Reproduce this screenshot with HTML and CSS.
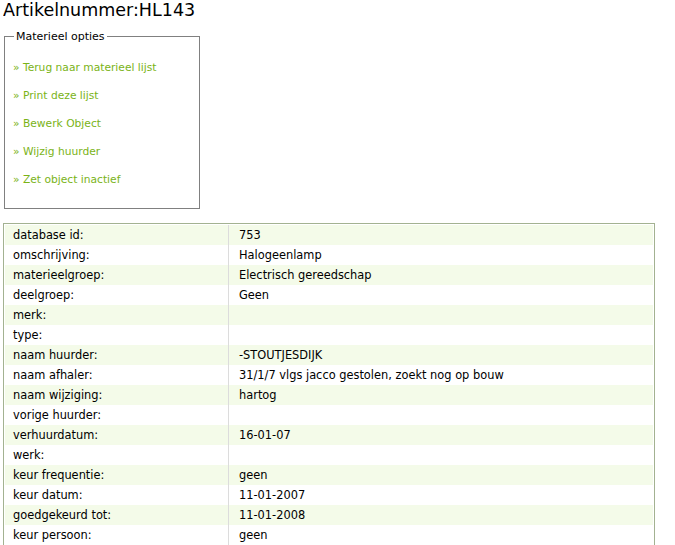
FILE: index.html
```html
<!DOCTYPE html>
<html lang="nl">

<head>
  <meta charset="UTF-8">
  <title>Artikelnummer:HL143</title>
  <link rel="stylesheet" href="styles.css">
</head>

<body>
  <h1 class="title">Artikelnummer:HL143</h1>

  <fieldset class="options">
    <legend>Materieel opties</legend>
    <ul class="option-list">
      <li><a href="#">&raquo; Terug naar materieel lijst</a></li>
      <li><a href="#">&raquo; Print deze lijst</a></li>
      <li><a href="#">&raquo; Bewerk Object</a></li>
      <li><a href="#">&raquo; Wijzig huurder</a></li>
      <li><a href="#">&raquo; Zet object inactief</a></li>
    </ul>
  </fieldset>

  <table class="details">
    <tr><td class="label">database id:</td><td class="value">753</td></tr>
    <tr><td class="label">omschrijving:</td><td class="value">Halogeenlamp</td></tr>
    <tr><td class="label">materieelgroep:</td><td class="value">Electrisch gereedschap</td></tr>
    <tr><td class="label">deelgroep:</td><td class="value">Geen</td></tr>
    <tr><td class="label">merk:</td><td class="value"></td></tr>
    <tr><td class="label">type:</td><td class="value"></td></tr>
    <tr><td class="label">naam huurder:</td><td class="value">-STOUTJESDIJK</td></tr>
    <tr><td class="label">naam afhaler:</td><td class="value">31/1/7 vlgs jacco gestolen, zoekt nog op bouw</td></tr>
    <tr><td class="label">naam wijziging:</td><td class="value">hartog</td></tr>
    <tr><td class="label">vorige huurder:</td><td class="value"></td></tr>
    <tr><td class="label">verhuurdatum:</td><td class="value">16-01-07</td></tr>
    <tr><td class="label">werk:</td><td class="value"></td></tr>
    <tr><td class="label">keur frequentie:</td><td class="value">geen</td></tr>
    <tr><td class="label">keur datum:</td><td class="value">11-01-2007</td></tr>
    <tr><td class="label">goedgekeurd tot:</td><td class="value">11-01-2008</td></tr>
    <tr><td class="label">keur persoon:</td><td class="value">geen</td></tr>
  </table>
</body>

</html>
```

FILE: styles.css
```css
body {
  margin: 0 0 0 3px;
  font-family: "DejaVu Sans", Verdana, sans-serif;
  font-size: 11.4px;
  color: #000;
  background: #fff;
}

.title {
  margin: 0;
  font-size: 17.5px;
  font-weight: normal;
  line-height: 20px;
}

.options {
  width: 196px;
  height: 179px;
  box-sizing: border-box;
  margin: 10px 0 14px 1px;
  padding: 0 0 0 8px;
  border: 1px solid #808080;
}

.options legend {
  padding: 0 2px;
  margin-left: 1px;
  font-size: 11px;
}

.option-list {
  list-style: none;
  margin: 0;
  padding: 19px 0 0;
  font-size: 10.7px;
}

.option-list li {
  height: 28px;
  line-height: 12px;
}

.option-list a {
  color: #7ab317;
  text-decoration: none;
}

.details {
  width: 652px;
  border: 1px solid #a3b291;
  border-spacing: 0;
  padding: 1px;
}

.details tr:nth-child(odd) td {
  background: #f4fbe9;
}

.details td {
  height: 20px;
  padding: 0 0 0 8px;
  vertical-align: middle;
}

.details .label {
  width: 215px;
}

.details .value {
  padding-left: 10px;
  border-left: 1px solid #dcdcdc;
}
```
